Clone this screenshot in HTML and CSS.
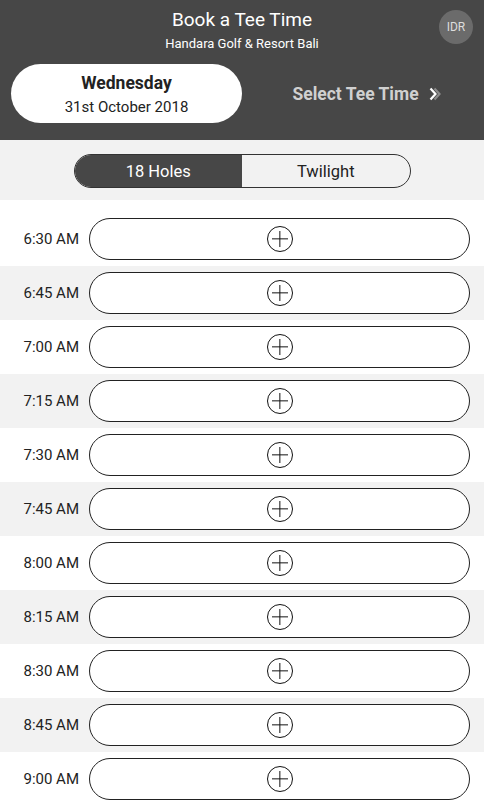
FILE: index.html
```html
<!DOCTYPE html>
<html>
<head>
<meta charset="utf-8">
<link rel="stylesheet" href="styles.css">
</head>
<body>
<div class="app">
  <header class="header">
    <div class="title">Book a Tee Time</div>
    <div class="subtitle">Handara Golf &amp; Resort Bali</div>
    <div class="currency">IDR</div>
    <div class="date-row">
      <div class="date-pill">
        <div class="day">Wednesday</div>
        <div class="date">31st October 2018</div>
      </div>
      <div class="next">
        <span>Select Tee Time</span>
        <svg class="chev" width="13" height="14" viewBox="0 0 13 14">
          <polyline points="5.5,1.5 10.5,7 5.5,12.5" fill="none" stroke="#8a8a8a" stroke-width="2.2"/>
          <polyline points="1.5,1.5 6.5,7 1.5,12.5" fill="none" stroke="#fff" stroke-width="2.2"/>
        </svg>
      </div>
    </div>
  </header>
  <div class="tabs-band">
    <div class="tabs">
      <div class="tab active">18 Holes</div>
      <div class="tab">Twilight</div>
    </div>
  </div>
  <div class="list">
    <div class="row"><div class="time">6:30 AM</div><div class="slot"><span class="plus"></span></div></div>
    <div class="row alt"><div class="time">6:45 AM</div><div class="slot"><span class="plus"></span></div></div>
    <div class="row"><div class="time">7:00 AM</div><div class="slot"><span class="plus"></span></div></div>
    <div class="row alt"><div class="time">7:15 AM</div><div class="slot"><span class="plus"></span></div></div>
    <div class="row"><div class="time">7:30 AM</div><div class="slot"><span class="plus"></span></div></div>
    <div class="row alt"><div class="time">7:45 AM</div><div class="slot"><span class="plus"></span></div></div>
    <div class="row"><div class="time">8:00 AM</div><div class="slot"><span class="plus"></span></div></div>
    <div class="row alt"><div class="time">8:15 AM</div><div class="slot"><span class="plus"></span></div></div>
    <div class="row"><div class="time">8:30 AM</div><div class="slot"><span class="plus"></span></div></div>
    <div class="row alt"><div class="time">8:45 AM</div><div class="slot"><span class="plus"></span></div></div>
    <div class="row"><div class="time">9:00 AM</div><div class="slot"><span class="plus"></span></div></div>
  </div>
</div>
</body>
</html>
```
FILE: styles.css
```css
html, body {
  margin: 0;
  padding: 0;
  background: #fff;
}
body {
  font-family: Roboto, "Liberation Sans", sans-serif;
  color: #222;
  overflow: hidden;
}
.app {
  width: 484px;
  height: 800px;
  overflow: hidden;
}
.header {
  position: relative;
  background: #474747;
  height: 140px;
  box-sizing: border-box;
  padding-top: 8px;
  text-align: center;
  color: #fff;
}
.title {
  font-size: 19px;
  line-height: 24px;
}
.subtitle {
  font-size: 13px;
  line-height: 16px;
  margin-top: 4px;
}
.currency {
  position: absolute;
  left: 439px;
  top: 10px;
  width: 34px;
  height: 34px;
  border-radius: 50%;
  background: #6b6b6b;
  color: #ddd;
  font-size: 12px;
  line-height: 34px;
  text-align: center;
}
.date-row {
  display: flex;
  align-items: center;
  margin-top: 12px;
  padding-left: 11px;
}
.date-pill {
  width: 231px;
  height: 59px;
  box-sizing: border-box;
  background: #fff;
  border-radius: 30px;
  color: #222;
  display: flex;
  flex-direction: column;
  justify-content: center;
  align-items: center;
}
.day {
  font-weight: bold;
  font-size: 17.5px;
  line-height: 22px;
  margin-top: 1px;
}
.date {
  font-size: 15px;
  line-height: 20px;
  margin-top: 3px;
}
.next {
  flex: 1;
  display: flex;
  justify-content: center;
  align-items: center;
  gap: 10px;
  color: #d0d0d0;
  font-weight: bold;
  font-size: 17.5px;
  padding-left: 8px;
}
.chev {
  display: block;
}
.tabs-band {
  background: #f2f2f2;
  height: 60px;
  display: flex;
  align-items: center;
  justify-content: center;
}
.tabs {
  display: flex;
  width: 337px;
  height: 34px;
  margin-top: 2px;
  box-sizing: border-box;
  border: 1px solid #333;
  border-radius: 17px;
  overflow: hidden;
}
.tab {
  flex: 1;
  display: flex;
  align-items: center;
  justify-content: center;
  font-size: 16.5px;
  color: #222;
}
.tab.active {
  background: #474747;
  color: #fff;
}
.list {
  padding-top: 12px;
}
.row {
  height: 54px;
  display: flex;
  align-items: center;
  padding-right: 14px;
}
.row.alt {
  background: #f2f2f2;
}
.time {
  width: 79px;
  text-align: right;
  font-size: 15px;
  color: #222;
  flex: none;
}
.slot {
  margin-left: 10px;
  flex: 1;
  height: 42px;
  box-sizing: border-box;
  border: 1.5px solid #222;
  border-radius: 21px;
  background: #fff;
  display: flex;
  align-items: center;
  justify-content: center;
}
.plus {
  position: relative;
  width: 26px;
  height: 26px;
  box-sizing: border-box;
  border: 1.3px solid #111;
  border-radius: 50%;
}
.plus::before, .plus::after {
  content: "";
  position: absolute;
  background: #111;
  left: 50%;
  top: 50%;
}
.plus::before {
  width: 16px;
  height: 1.3px;
  transform: translate(-50%, -50%);
}
.plus::after {
  width: 1.3px;
  height: 16px;
  transform: translate(-50%, -50%);
}
```
